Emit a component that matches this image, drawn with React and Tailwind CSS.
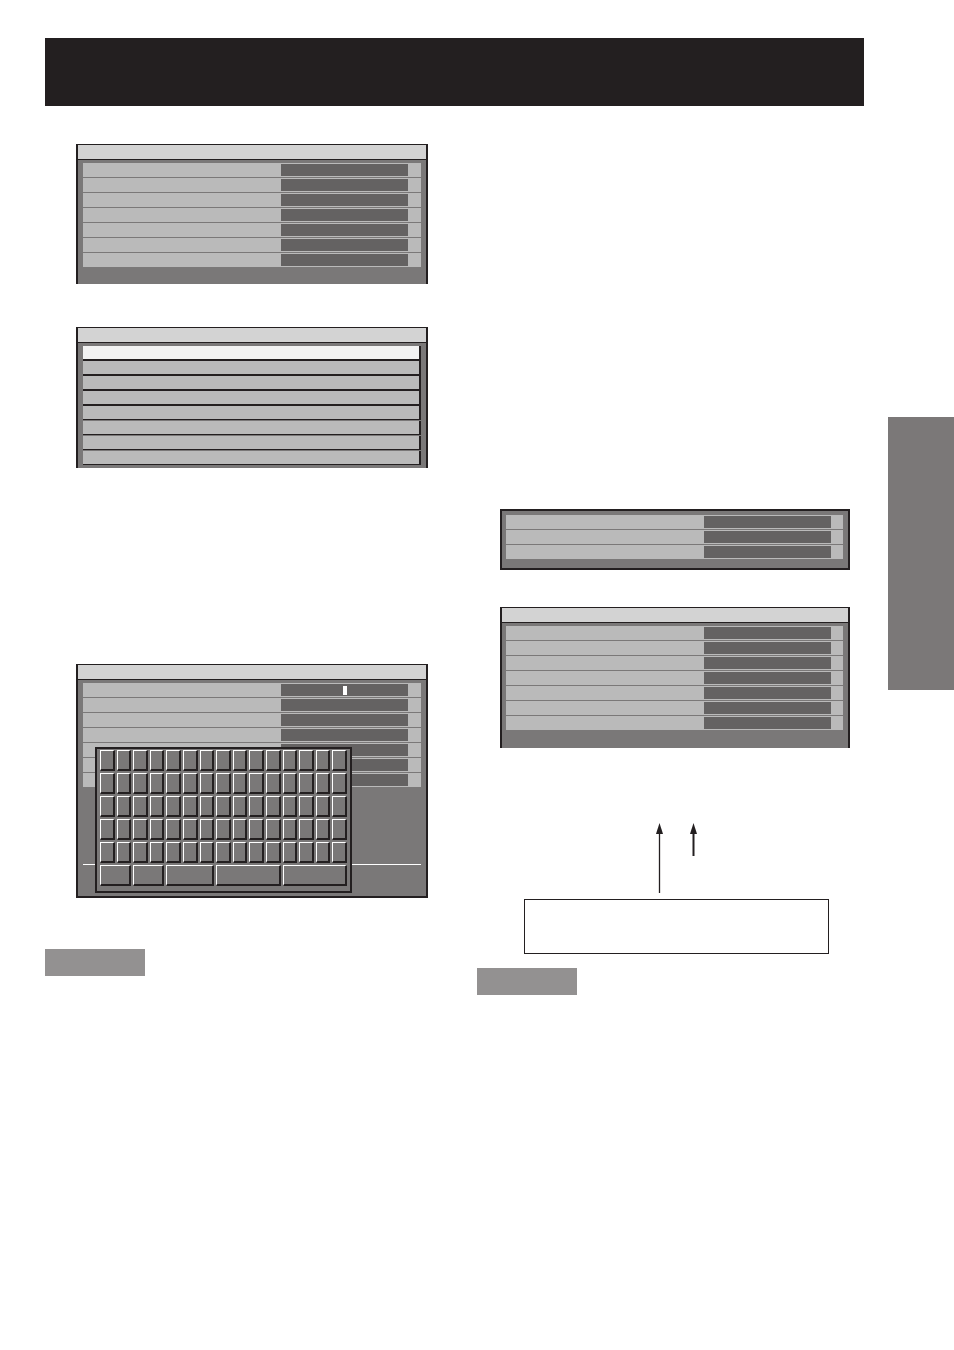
import React from "react";

function Row({ cursor }) {
  return (
    <div className="h-[14px] bg-[#bababa] flex">
      <div className="w-[198px] shrink-0" />
      <div className="w-[127px] h-[12px] mt-[1px] bg-[#646262] flex">
        {cursor && <div className="ml-[62px] mt-[2px] w-[4px] h-[9px] bg-white" />}
      </div>
    </div>
  );
}

function Rows({ n, cursorFirst }) {
  return (
    <div className="flex flex-col gap-[1px]">
      {Array.from({ length: n }).map((_, i) => (
        <Row key={i} cursor={cursorFirst && i === 0} />
      ))}
    </div>
  );
}

function Key({ span }) {
  const spanClass =
    span === 2 ? "col-span-2" : span === 3 ? "col-span-3" : span === 4 ? "col-span-4" : "";
  return (
    <div
      className={
        "border-l border-t border-l-white border-t-white border-r-2 border-b-2 border-r-[#231f20] border-b-[#231f20] bg-[#7a7878] " +
        spanClass
      }
    />
  );
}

function Keyboard() {
  return (
    <div className="absolute left-[17px] top-[82px] w-[257px] h-[146px] border-2 border-[#231f20] bg-[#7a7878] px-[3px] pt-[1px]">
      <div className="grid grid-cols-[repeat(15,minmax(0,1fr))] auto-rows-[21px] gap-[2px]">
        {Array.from({ length: 75 }).map((_, i) => (
          <Key key={i} />
        ))}
        <Key span={2} />
        <Key span={2} />
        <Key span={3} />
        <Key span={4} />
        <Key span={4} />
      </div>
    </div>
  );
}

function SelectRows() {
  return (
    <div className="flex flex-col">
      <div className="h-[15px] bg-[#f2f2f2] border-b-2 border-r-2 border-[#231f20]" />
      <div className="h-[15px] bg-[#bababa] border-b-2 border-r-2 border-[#231f20]" />
      <div className="h-[15px] bg-[#bababa] border-b-2 border-r-2 border-[#231f20]" />
      <div className="h-[15px] bg-[#bababa] border-b-2 border-r-2 border-[#231f20]" />
      <div className="h-[14px] mb-[1px] bg-[#bababa] border-b border-r-2 border-[#231f20]" />
      <div className="h-[14px] mb-[1px] bg-[#bababa] border-b border-r-2 border-[#231f20]" />
      <div className="h-[14px] mb-[1px] bg-[#bababa] border-b border-r-2 border-[#231f20]" />
      <div className="h-[14px] bg-[#bababa] border-b border-r-2 border-[#231f20]" />
    </div>
  );
}

export default function App() {
  return (
    <div className="w-[954px] h-[1350px] bg-white flex">
      <div className="w-[888px] shrink-0">
        <div className="ml-[45px] mt-[38px] w-[819px] h-[68px] bg-[#231f20]" />
        <div className="flex">
          {/* Left column */}
          <div className="w-[432px] ml-[45px] shrink-0">
            {/* Panel 1 */}
            <div className="ml-[31px] mt-[38px] w-[352px] border-x-2 border-t border-[#231f20] bg-[#7a7878]">
              <div className="h-[15px] bg-[#d3d3d3] border-b border-[#231f20]" />
              <div className="px-[5px] pt-[3px] pb-[17px]">
                <Rows n={7} />
              </div>
            </div>

            {/* Panel 2 */}
            <div className="ml-[31px] mt-[43px] w-[352px] border-x-2 border-t border-[#231f20] bg-[#7a7878]">
              <div className="h-[15px] bg-[#d3d3d3] border-b border-[#231f20]" />
              <div className="px-[5px] pt-[3px] pb-[3px]">
                <SelectRows />
              </div>
            </div>

            {/* Panel 3 with keyboard */}
            <div className="relative ml-[31px] mt-[196px] w-[352px] border-x-2 border-t border-b-2 border-[#231f20] bg-[#7a7878]">
              <div className="h-[15px] bg-[#d3d3d3] border-b border-[#231f20]" />
              <div className="px-[5px] pt-[3px] pb-[31px]">
                <Rows n={7} cursorFirst />
                <div className="mt-[77px] h-[1px] bg-white" />
              </div>
              <Keyboard />
            </div>

            <div className="mt-[51px] w-[100px] h-[27px] bg-[#939191]" />
          </div>

          {/* Right column */}
          <div className="w-[411px] shrink-0">
            {/* Panel 4 */}
            <div className="ml-[23px] mt-[403px] w-[350px] border-2 border-[#231f20] bg-[#7a7878] pl-[4px] pr-[5px] pt-[4px] pb-[9px]">
              <Rows n={3} />
            </div>

            {/* Panel 5 */}
            <div className="ml-[23px] mt-[37px] w-[350px] border-x-2 border-t border-[#231f20] bg-[#7a7878]">
              <div className="h-[15px] bg-[#d3d3d3] border-b border-[#231f20]" />
              <div className="pl-[4px] pr-[5px] pt-[3px] pb-[18px]">
                <Rows n={7} />
              </div>
            </div>

            {/* Arrows */}
            <svg width="411" height="151" className="block">
              <line x1="182.5" y1="83" x2="182.5" y2="145" stroke="#231f20" strokeWidth="1.3" />
              <polygon points="179,86 182.5,75 186,86" fill="#231f20" />
              <line x1="216.5" y1="83" x2="216.5" y2="108" stroke="#231f20" strokeWidth="2" />
              <polygon points="213,86 216.5,75 220,86" fill="#231f20" />
            </svg>

            <div className="ml-[47px] w-[305px] h-[55px] border border-[#231f20]" />

            <div className="mt-[14px] w-[100px] h-[27px] bg-[#939191]" />
          </div>
        </div>
      </div>
      <div className="w-[66px] mt-[417px] h-[273px] bg-[#7b7878]" />
    </div>
  );
}
